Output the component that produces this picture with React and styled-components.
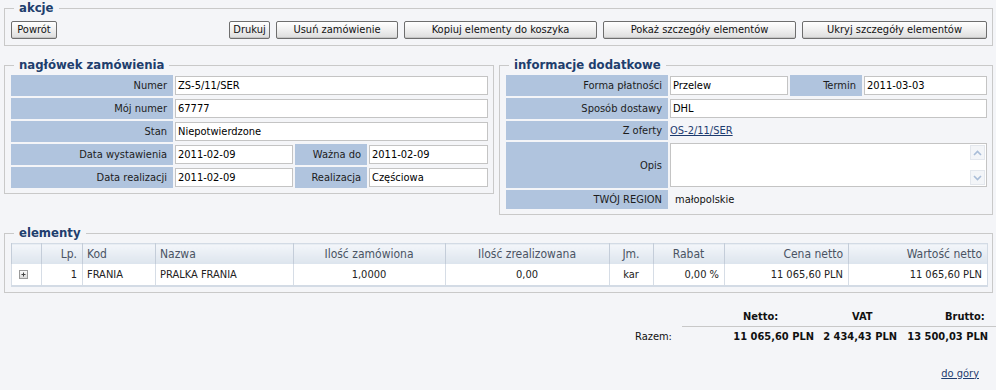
import styled, { createGlobalStyle } from "styled-components";

const FONT = `"DejaVu Sans Condensed", Tahoma, "Liberation Sans", sans-serif`;

const Global = createGlobalStyle`
  body {
    margin: 0;
    background: #f4f5f8;
    font-family: ${FONT};
    font-size: 11px;
    color: #222;
  }
  * { box-sizing: border-box; }
`;

// fixed button widths, straight from the reference
const actions = [
  { text: "Drukuj", w: 41 },
  { text: "Usuń zamówienie", w: 122 },
  { text: "Kopiuj elementy do koszyka", w: 193 },
  { text: "Pokaż szczegóły elementów", w: 193 },
  { text: "Ukryj szczegóły elementów", w: 185 },
];

const columns = [
  { title: "", w: 30 },
  { title: "Lp.", w: 41, align: "right" },
  { title: "Kod", w: 73, align: "left" },
  { title: "Nazwa", w: 138, align: "left" },
  { title: "Ilość zamówiona", w: 152, align: "center" },
  { title: "Ilość zrealizowana", w: 164, align: "center" },
  { title: "Jm.", w: 44, align: "center" },
  { title: "Rabat", w: 71, align: "center", body: "right" },
  { title: "Cena netto", w: 124, align: "right" },
  { title: "Wartość netto", w: 139, align: "right" },
];

const items = [
  ["", "1", "FRANIA", "PRALKA FRANIA", "1,0000", "0,00", "kar", "0,00 %", "11 065,60 PLN", "11 065,60 PLN"],
];

function PlusIcon() {
  return (
    <svg width="9" height="9" viewBox="0 0 9 9">
      <defs>
        <linearGradient id="pg" x1="0" y1="0" x2="0" y2="1">
          <stop offset="0" stopColor="#ffffff" />
          <stop offset="1" stopColor="#d6d6d6" />
        </linearGradient>
      </defs>
      <rect x="0.5" y="0.5" width="8" height="8" fill="url(#pg)" stroke="#9a9a9a" />
      <path d="M2.5 4.5h4M4.5 2.5v4" stroke="#444" strokeWidth="1" />
    </svg>
  );
}

function Chevron({ up }) {
  return (
    <svg width="9" height="6" viewBox="0 0 9 6">
      <path
        d={up ? "M1 5L4.5 1.5L8 5" : "M1 1L4.5 4.5L8 1"}
        fill="none"
        stroke="#a9bdd8"
        strokeWidth="1.6"
      />
    </svg>
  );
}

export default function App() {
  return (
    <Page>
      <Global />

      <Box>
        <Legend>akcje</Legend>
        <Toolbar>
          <Button $w={46}>Powrót</Button>
          <ButtonGroup>
            {actions.map((a) => (
              <Button key={a.text} $w={a.w}>{a.text}</Button>
            ))}
          </ButtonGroup>
        </Toolbar>
      </Box>

      <Columns>
        <Box $w={490}>
          <Legend>nagłówek zamówienia</Legend>
          <Form>
            <Label>Numer</Label>
            <Value $span><Input readOnly value="ZS-5/11/SER" /></Value>
            <Label>Mój numer</Label>
            <Value $span><Input readOnly value="67777" /></Value>
            <Label>Stan</Label>
            <Value $span><Input readOnly value="Niepotwierdzone" /></Value>
            <Label>Data wystawienia</Label>
            <Value><Input readOnly value="2011-02-09" /></Value>
            <Label>Ważna do</Label>
            <Value><Input readOnly value="2011-02-09" /></Value>
            <Label>Data realizacji</Label>
            <Value><Input readOnly value="2011-02-09" /></Value>
            <Label>Realizacja</Label>
            <Value><Input readOnly value="Częściowa" /></Value>
          </Form>
        </Box>

        <Box $w={494}>
          <Legend>informacje dodatkowe</Legend>
          <Form>
            <Label>Forma płatności</Label>
            <Value><Input readOnly value="Przelew" /></Value>
            <Label>Termin</Label>
            <Value><Input readOnly value="2011-03-03" /></Value>
            <Label>Sposób dostawy</Label>
            <Value $span><Input readOnly value="DHL" /></Value>
            <Label>Z oferty</Label>
            <Value $span><Link href="#">OS-2/11/SER</Link></Value>
            <Label>Opis</Label>
            <Value $span>
              <TextBox>
                <TextArea readOnly />
                <ScrollBar>
                  <ScrollBtn><Chevron up /></ScrollBtn>
                  <ScrollBtn><Chevron /></ScrollBtn>
                </ScrollBar>
              </TextBox>
            </Value>
            <Label>TWÓJ REGION</Label>
            <Value $span><Plain>małopolskie</Plain></Value>
          </Form>
        </Box>
      </Columns>

      <Box $mt={10}>
        <Legend>elementy</Legend>
        <Table>
          <colgroup>
            {columns.map((c, i) => <col key={i} style={{ width: c.w }} />)}
          </colgroup>
          <thead>
            <tr>
              {columns.map((c, i) => (
                <Th key={i} $align={c.align}>{c.title}</Th>
              ))}
            </tr>
          </thead>
          <tbody>
            {items.map((row, r) => (
              <tr key={r}>
                {row.map((cell, i) => (
                  <Td key={i} $align={i === 0 ? "center" : columns[i].body || columns[i].align}>
                    {i === 0 ? <PlusIcon /> : cell}
                  </Td>
                ))}
              </tr>
            ))}
          </tbody>
        </Table>
      </Box>

      <Totals>
        <TotalsHead>
          <HeadCell $w={109}>Netto:</HeadCell>
          <HeadCell $w={93}>VAT</HeadCell>
          <HeadCell $w={51}>Brutto:</HeadCell>
        </TotalsHead>
        <TotalsRow>
          <RowLabel>Razem:</RowLabel>
          <Amount $w={115}>11 065,60 PLN</Amount>
          <Amount $w={83}>2 434,43 PLN</Amount>
          <Amount $w={91}>13 500,03 PLN</Amount>
        </TotalsRow>
      </Totals>

      <Footer>
        <Link href="#">do góry</Link>
      </Footer>
    </Page>
  );
}

const Page = styled.div`
  width: 996px;
  padding: 0 3px 0 4px;
`;

const Box = styled.fieldset`
  margin: ${(p) => p.$mt || 0}px 0 0 0;
  width: ${(p) => (p.$w ? `${p.$w}px` : "auto")};
  min-width: 0;
  padding: 2px 5px 5px 6px;
  border: 1px solid #c9c9c9;
`;

const Legend = styled.legend`
  margin-left: 3px;
  padding: 0 5px;
  font: bold 13px/16px ${FONT};
  color: #213e6d;
`;

const Toolbar = styled.div`
  display: flex;
  justify-content: space-between;
  padding: 3px 0 1px;
`;

const ButtonGroup = styled.div`
  display: flex;
  gap: 6px;
`;

const Button = styled.button`
  width: ${(p) => p.$w}px;
  height: 18px;
  padding: 0;
  border: 1px solid #6e6e6e;
  border-radius: 2px;
  background: linear-gradient(#ffffff 0%, #f1f1f1 45%, #dcdcdc 100%);
  box-shadow: inset 0 -1px 0 #c6c6c6;
  font: 11px/16px ${FONT};
  color: #111;
`;

const Columns = styled.div`
  display: flex;
  align-items: flex-start;
  gap: 5px;
  margin-top: 11px;
`;

const Form = styled.div`
  display: grid;
  grid-template-columns: 162px 118px 72px 1fr;
  gap: 2px;
`;

const Label = styled.div`
  display: flex;
  align-items: center;
  justify-content: flex-end;
  padding-right: 6px;
  background: #b0c4de;
  color: #1c1c1c;
`;

const Value = styled.div`
  grid-column: ${(p) => (p.$span ? "span 3" : "span 1")};
  display: flex;
  align-items: center;
  min-height: 19px;
  padding: 1px 0;
`;

const Input = styled.input`
  width: 100%;
  height: 19px;
  margin: 0;
  padding: 0 2px;
  border: 1px solid #c4c4c4;
  background: #fff;
  font: 11px ${FONT};
  color: #000;
  outline: none;
`;

const Link = styled.a`
  font: 11px/17px ${FONT};
  color: #1d3c6f;
  text-decoration: underline;
`;

const Plain = styled.span`
  padding-left: 5px;
  line-height: 16px;
  color: #111;
`;

const TextBox = styled.div`
  display: flex;
  width: 100%;
  height: 44px;
  border: 1px solid #c4c4c4;
  background: #fff;
`;

const TextArea = styled.textarea`
  flex: 1;
  border: 0;
  resize: none;
  outline: none;
  font: 11px ${FONT};
`;

const ScrollBar = styled.div`
  display: flex;
  flex-direction: column;
  justify-content: space-between;
  width: 16px;
  padding: 1px 1px 1px 0;
`;

const ScrollBtn = styled.div`
  display: flex;
  align-items: center;
  justify-content: center;
  height: 15px;
  border: 1px solid #e3e7ed;
  background: #f3f5f8;
`;

const Table = styled.table`
  width: 976px;
  table-layout: fixed;
  border-collapse: collapse;
  border: 1px solid #d3dbe5;
  border-bottom: 2px solid #d3dbe5;
`;

const Th = styled.th`
  height: 20px;
  padding: 0 5px 0 4px;
  border-left: 1px solid #c4cdd9;
  background: linear-gradient(#f3f6fa, #dce4ed);
  font: normal 12px/18px ${FONT};
  color: #4a5463;
  text-align: ${(p) => p.$align || "left"};
  white-space: nowrap;
`;

const Td = styled.td`
  height: 22px;
  padding: 0 5px 0 4px;
  border-left: 1px solid #d6dde6;
  background: #fff;
  color: #222;
  text-align: ${(p) => p.$align || "left"};
  white-space: nowrap;

  svg { display: block; margin: 0 auto 0 3px; }
`;

const Totals = styled.div`
  margin-top: 16px;
  display: flex;
  flex-direction: column;
  align-items: flex-end;
`;

const TotalsHead = styled.div`
  display: flex;
  width: 314px;
  margin-right: -3px;
  padding: 0 0 2px 61px;
  border-bottom: 1px solid #c8c8c8;
  font-weight: bold;
  line-height: 15px;
  color: #111;
`;

const HeadCell = styled.div`
  width: ${(p) => p.$w}px;
`;

const TotalsRow = styled.div`
  display: flex;
  width: 362px;
  margin-right: -3px;
  padding: 3px 8px 0 1px;
  line-height: 14px;
  color: #111;
`;

const RowLabel = styled.div`
  flex: 1;
`;

const Amount = styled.div`
  width: ${(p) => p.$w}px;
  text-align: right;
  font-weight: bold;
`;

const Footer = styled.div`
  display: flex;
  justify-content: flex-end;
  margin-top: 21px;
  padding-right: 14px;
`;
